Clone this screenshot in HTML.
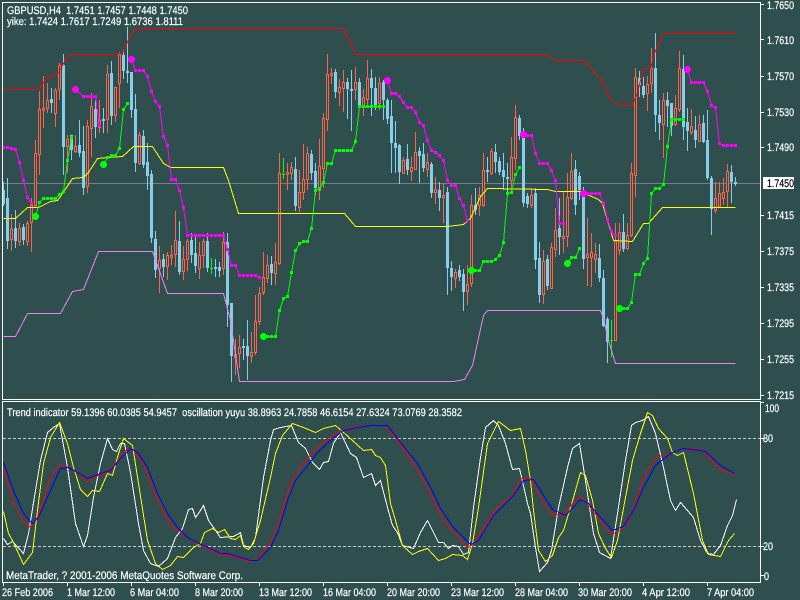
<!DOCTYPE html>
<html><head><meta charset="utf-8"><style>
html,body{margin:0;padding:0;background:#2F4F4F;width:800px;height:600px;overflow:hidden}
svg{display:block}
text{font-family:"Liberation Sans",sans-serif;font-size:11px;fill:#fff;stroke:#fff;stroke-width:.2px;text-rendering:geometricPrecision}
.c{shape-rendering:crispEdges}
.l{fill:none;stroke-width:1;shape-rendering:crispEdges;transform:translate(.5px,.5px)}
</style></head><body>
<svg width="800" height="600" viewBox="0 0 800 600" xmlns="http://www.w3.org/2000/svg">
<defs>
<marker id="mm" markerUnits="userSpaceOnUse" markerWidth="4" markerHeight="4" refX="1.5" refY="1.5" overflow="visible"><rect width="3" height="3" fill="#f0f" shape-rendering="crispEdges"/></marker>
<marker id="mg" markerUnits="userSpaceOnUse" markerWidth="4" markerHeight="4" refX="1.5" refY="1.5" overflow="visible"><rect width="3" height="3" fill="#0f0" shape-rendering="crispEdges"/></marker>
</defs>
<rect width="800" height="600" fill="#2F4F4F"/>
<g class="c">
<path d="M3 183.5H761" stroke="#708090" fill="none"/>
<path fill="none" stroke="#87CEEB" d="M3.5 182V206M7.5 178V249M15.5 210V248M23.5 224V245M51.5 88V113M63.5 54V175M71.5 135V160M79.5 120V157M83.5 126V195M95.5 100V138M103.5 108V133M111.5 61V125M123.5 50V79M127.5 27V83M131.5 72V118M135.5 94V172M143.5 130V168M147.5 143V190M151.5 170V243M155.5 231V278M163.5 254V277M179.5 221V275M191.5 233V263M195.5 235V273M207.5 233V272M215.5 259V277M219.5 262V277M227.5 233V327M231.5 303V382M243.5 339V360M247.5 320V380M271.5 256V285M295.5 157V211M311.5 150V180M315.5 163V195M335.5 69V98M347.5 78V119M351.5 70V131M359.5 78V107M371.5 69V116M375.5 77V110M383.5 80V120M387.5 98V124M391.5 100V173M395.5 121V173M399.5 144V184M407.5 144V175M419.5 147V183M423.5 143V172M431.5 162V198M439.5 182V211M447.5 187V295M451.5 261V291M459.5 265V281M463.5 269V311M475.5 188V215M487.5 157V182M495.5 144V173M499.5 157V175M503.5 153V190M507.5 163V193M519.5 115V140M523.5 128V207M527.5 193V208M535.5 188V269M539.5 242V303M547.5 255V290M559.5 198V255M575.5 160V215M579.5 172V200M583.5 187V269M599.5 244V282M603.5 270V327M607.5 317V363M623.5 214V252M639.5 71V97M643.5 77V98M655.5 33V132M659.5 100V140M667.5 92V127M671.5 103V136M683.5 55V140M687.5 108V151M695.5 116V148M703.5 115V143M707.5 110V180M711.5 176V235M731.5 165V203M735.5 177V186"/>
<path fill="#87CEEB" d="M2 190h3V204h-3zM6 198h3V241h-3zM14 228h3V241h-3zM22 227h3V240h-3zM50 99h3V103h-3zM62 65h3V147h-3zM70 135h3V150h-3zM78 145h3V153h-3zM82 151h3V188h-3zM94 109h3V127h-3zM102 119h3V121h-3zM110 73h3V116h-3zM122 55h3V71h-3zM126 71h3V73h-3zM130 72h3V110h-3zM134 109h3V163h-3zM142 136h3V165h-3zM146 162h3V176h-3zM150 174h3V238h-3zM154 239h3V270h-3zM162 259h3V267h-3zM178 241h3V272h-3zM190 240h3V255h-3zM194 253h3V266h-3zM206 241h3V268h-3zM214 267h3V269h-3zM218 267h3V271h-3zM226 242h3V305h-3zM230 303h3V356h-3zM242 346h3V348h-3zM246 346h3V356h-3zM270 264h3V273h-3zM294 169h3V206h-3zM310 154h3V173h-3zM314 171h3V188h-3zM334 72h3V92h-3zM346 82h3V89h-3zM350 89h3V91h-3zM358 82h3V105h-3zM370 78h3V88h-3zM374 88h3V105h-3zM382 82h3V100h-3zM386 100h3V119h-3zM390 116h3V143h-3zM394 143h3V148h-3zM398 145h3V172h-3zM406 159h3V170h-3zM418 151h3V156h-3zM422 154h3V168h-3zM430 164h3V193h-3zM438 190h3V198h-3zM446 192h3V268h-3zM450 268h3V277h-3zM458 270h3V277h-3zM462 274h3V292h-3zM474 205h3V210h-3zM486 170h3V172h-3zM494 152h3V162h-3zM498 161h3V172h-3zM502 170h3V177h-3zM506 177h3V179h-3zM518 118h3V136h-3zM522 135h3V203h-3zM526 196h3V204h-3zM534 193h3V260h-3zM538 258h3V295h-3zM546 259h3V286h-3zM558 228h3V237h-3zM574 169h3V205h-3zM578 176h3V190h-3zM582 192h3V259h-3zM598 258h3V278h-3zM602 278h3V326h-3zM606 319h3V342h-3zM622 232h3V249h-3zM638 78h3V85h-3zM642 86h3V95h-3zM654 68h3V115h-3zM658 115h3V123h-3zM666 100h3V106h-3zM670 103h3V126h-3zM682 69h3V127h-3zM686 122h3V131h-3zM694 130h3V140h-3zM702 123h3V142h-3zM706 140h3V178h-3zM710 178h3V209h-3zM730 172h3V182h-3zM734 182h3V184h-3z"/>
<path fill="none" stroke="#FF6347" d="M11.5 214V251M19.5 223V246M27.5 221V246M31.5 198V252M35.5 140V207M39.5 91V175M43.5 76V128M47.5 83V113M55.5 88V127M59.5 63V100M67.5 135V173M75.5 135V153M87.5 120V193M91.5 93V157M99.5 100V133M107.5 65V133M115.5 87V122M119.5 52V108M139.5 132V165M159.5 246V293M167.5 252V280M171.5 245V265M175.5 211V267M183.5 246V280M187.5 239V271M199.5 242V279M203.5 239V268M223.5 232V275M235.5 339V375M239.5 335V368M251.5 332V363M255.5 295V355M259.5 287V325M263.5 252V295M267.5 255V283M275.5 243V285M279.5 153V265M287.5 163V190M291.5 162V180M299.5 170V212M303.5 144V200M307.5 147V190M319.5 139V200M323.5 113V188M327.5 54V131M331.5 68V84M339.5 79V106M343.5 70V112M355.5 67V100M363.5 89V116M367.5 60V108M379.5 77V110M403.5 157V174M411.5 157V181M415.5 132V170M427.5 153V177M435.5 177V204M443.5 183V223M455.5 269V288M467.5 265V305M471.5 195V287M479.5 187V216M483.5 153V207M491.5 148V175M511.5 137V190M515.5 105V170M531.5 188V208M543.5 250V304M551.5 243V289M555.5 208V257M563.5 192V253M567.5 173V247M571.5 153V200M587.5 218V286M591.5 233V287M595.5 243V273M615.5 223V341M619.5 223V255M627.5 223V250M631.5 163V237M635.5 68V197M647.5 76V111M651.5 48V93M663.5 93V158M675.5 95V126M679.5 51V112M691.5 109V135M699.5 115V142M715.5 182V213M719.5 182V208M723.5 178V205M727.5 164V208"/>
<path fill="#2F4F4F" stroke="#FF6347" d="M10.5 229.5h2V239.5h-2zM18.5 228.5h2V241.5h-2zM26.5 223.5h2V241.5h-2zM30.5 205.5h2V222.5h-2zM34.5 153.5h2V205.5h-2zM38.5 109.5h2V154.5h-2zM42.5 108.5h2V110.5h-2zM46.5 100.5h2V108.5h-2zM54.5 90.5h2V113.5h-2zM58.5 65.5h2V89.5h-2zM66.5 139.5h2V146.5h-2zM74.5 146.5h2V151.5h-2zM86.5 126.5h2V186.5h-2zM90.5 106.5h2V128.5h-2zM98.5 120.5h2V127.5h-2zM106.5 74.5h2V119.5h-2zM114.5 87.5h2V115.5h-2zM118.5 54.5h2V83.5h-2zM138.5 135.5h2V163.5h-2zM158.5 260.5h2V268.5h-2zM166.5 255.5h2V266.5h-2zM170.5 255.5h2V257.5h-2zM174.5 240.5h2V254.5h-2zM182.5 259.5h2V271.5h-2zM186.5 241.5h2V259.5h-2zM198.5 255.5h2V268.5h-2zM202.5 241.5h2V255.5h-2zM222.5 242.5h2V268.5h-2zM234.5 354.5h2V357.5h-2zM238.5 347.5h2V353.5h-2zM250.5 352.5h2V356.5h-2zM254.5 321.5h2V352.5h-2zM258.5 293.5h2V321.5h-2zM262.5 277.5h2V292.5h-2zM266.5 265.5h2V278.5h-2zM274.5 262.5h2V273.5h-2zM278.5 173.5h2V263.5h-2zM286.5 172.5h2V174.5h-2zM290.5 167.5h2V173.5h-2zM298.5 192.5h2V207.5h-2zM302.5 179.5h2V192.5h-2zM306.5 153.5h2V179.5h-2zM318.5 166.5h2V190.5h-2zM322.5 118.5h2V168.5h-2zM326.5 74.5h2V119.5h-2zM330.5 73.5h2V75.5h-2zM338.5 87.5h2V92.5h-2zM342.5 82.5h2V88.5h-2zM354.5 82.5h2V89.5h-2zM362.5 97.5h2V105.5h-2zM366.5 78.5h2V99.5h-2zM378.5 83.5h2V103.5h-2zM402.5 160.5h2V173.5h-2zM410.5 167.5h2V171.5h-2zM414.5 152.5h2V169.5h-2zM426.5 162.5h2V169.5h-2zM434.5 189.5h2V192.5h-2zM442.5 195.5h2V197.5h-2zM454.5 272.5h2V278.5h-2zM466.5 284.5h2V291.5h-2zM470.5 205.5h2V283.5h-2zM478.5 195.5h2V205.5h-2zM482.5 170.5h2V205.5h-2zM490.5 151.5h2V173.5h-2zM510.5 157.5h2V180.5h-2zM514.5 117.5h2V158.5h-2zM530.5 195.5h2V205.5h-2zM542.5 261.5h2V294.5h-2zM550.5 247.5h2V288.5h-2zM554.5 230.5h2V249.5h-2zM562.5 236.5h2V238.5h-2zM566.5 197.5h2V236.5h-2zM570.5 171.5h2V198.5h-2zM586.5 254.5h2V257.5h-2zM590.5 252.5h2V257.5h-2zM594.5 254.5h2V259.5h-2zM614.5 241.5h2V340.5h-2zM618.5 232.5h2V250.5h-2zM626.5 235.5h2V248.5h-2zM630.5 173.5h2V235.5h-2zM634.5 77.5h2V175.5h-2zM646.5 84.5h2V93.5h-2zM650.5 68.5h2V83.5h-2zM662.5 100.5h2V124.5h-2zM674.5 108.5h2V124.5h-2zM678.5 68.5h2V109.5h-2zM690.5 126.5h2V132.5h-2zM698.5 124.5h2V141.5h-2zM714.5 198.5h2V210.5h-2zM718.5 193.5h2V206.5h-2zM722.5 192.5h2V198.5h-2zM726.5 171.5h2V191.5h-2z"/>
<path fill="none" stroke="#0f0" d="M211.5 258V274M210 268.5h3M283.5 158V179M282 174.5h3M611.5 320V357M610 340.5h3"/>

<polyline class="l" stroke="#f00" points="3,89 38,89 47,77 52,76 58,72 63,63 68,55 72,54 117,54 123,51 128,39 135,28 343,28 355,54 545,54 555,60 583,60 600,78 610,100 620,105 632,105 637,92 643,68 650,68 655,50 663,33 735,33"/>
<polyline class="l" stroke="#ff0" points="3,218 15,218 27,207 38,207 50,201 57,200 62,193 72,178 83,177 88,172 97,158 107,157 122,156 133,146 152,146 163,163 170,167 223,167 228,180 238,213 344,213 355,226 447,226 463,224 470,218 480,196 487,188 547,189 555,191 580,191 598,199 602,203 613,240 632,241 643,223 648,223 662,207 735,207"/>
<polyline class="l" stroke="#EE82EE" points="3,336 15,336 27,313 60,313 72,291 83,289 98,251 152,251 167,293 223,293 230,320 239,381 453,381 464,379 472,365 483,315 487,310 600,310 603,318 608,340 615,363 735,363"/>

<polyline class="l" stroke="#f0f" marker-start="url(#mm)" marker-mid="url(#mm)" marker-end="url(#mm)" points="3,147 7,147 11,148 15,149 19,162 23,180 27,197 31,203"/>
<polyline class="l" stroke="#f0f" marker-mid="url(#mm)" marker-end="url(#mm)" points="75,89 83,96 87,96 91,96 95,96 99,125"/>
<polyline class="l" stroke="#f0f" marker-mid="url(#mm)" marker-end="url(#mm)" points="131,59 135,70 139,70 143,70 147,76 151,91 155,101 159,106 163,136 167,145 171,179 175,179 179,190 183,207 187,235 191,235 195,235 199,235 203,235 207,235 211,235 215,235 219,235 223,235 227,249 231,265 235,265 239,275 243,275 247,275 251,275 255,275 259,277"/>
<polyline class="l" stroke="#f0f" marker-mid="url(#mm)" marker-end="url(#mm)" points="387,80 391,93 395,93 399,96 403,102 407,107 411,107 415,112 419,122 423,125 427,140 431,150 435,152 439,155 443,160 447,180 451,185 455,185 459,198 463,205 467,220"/>
<polyline class="l" stroke="#f0f" marker-mid="url(#mm)" marker-end="url(#mm)" points="523,134 527,135 531,135 535,153 539,163 543,163 547,163 551,170 555,180 559,223 563,223"/>
<polyline class="l" stroke="#f0f" marker-mid="url(#mm)" marker-end="url(#mm)" points="583,193 587,193 591,193 595,193 599,193 603,203 607,219 611,231 615,235"/>
<polyline class="l" stroke="#f0f" marker-mid="url(#mm)" marker-end="url(#mm)" points="687,69 691,82 695,82 699,82 703,82 707,91 711,105 715,107 719,143 723,145 727,145 731,145 735,145"/>

<polyline class="l" stroke="#0f0" marker-mid="url(#mg)" marker-end="url(#mg)" points="35,216 39,202 43,198 47,198 51,198 55,198 59,194 63,191 67,160 71,137"/>
<polyline class="l" stroke="#0f0" marker-mid="url(#mg)" marker-end="url(#mg)" points="103,164 107,157 111,155 115,155 119,148 123,109 127,103"/>
<polyline class="l" stroke="#0f0" marker-mid="url(#mg)" marker-end="url(#mg)" points="263,336 267,336 271,336 275,336 279,310 283,298 287,296 291,272 295,250 299,243 303,241 307,241 311,228 315,190 319,188 323,182 327,163 331,163 335,150 339,150 343,150 347,150 351,150 355,141 359,106 363,106 367,106 371,106 375,106 379,106 383,106"/>
<polyline class="l" stroke="#0f0" marker-mid="url(#mg)" marker-end="url(#mg)" points="471,270 475,270 479,270 483,261 487,261 491,261 495,259 499,255 503,242 507,193 511,192 515,174 519,167"/>
<polyline class="l" stroke="#0f0" marker-mid="url(#mg)" marker-end="url(#mg)" points="567,263 571,257 575,257 579,248"/>
<polyline class="l" stroke="#0f0" marker-mid="url(#mg)" marker-end="url(#mg)" points="619,308 623,308 627,308 631,302 635,274 639,274 643,263 647,258 651,193 655,188 659,188 663,184 667,146 671,119 675,119 679,119 683,119"/>
<g fill="#0f0"><circle cx="35.5" cy="216.5" r="3.5"/><circle cx="103.5" cy="164.5" r="3.5"/><circle cx="263.5" cy="336.5" r="3.5"/><circle cx="471.5" cy="270.5" r="3.5"/><circle cx="567.5" cy="263.5" r="3.5"/><circle cx="619.5" cy="308.5" r="3.5"/></g>
<g fill="#f0f"><circle cx="75.5" cy="89.5" r="3.5"/><circle cx="131.5" cy="59.5" r="3.5"/><circle cx="387.5" cy="80.5" r="3.5"/><circle cx="523.5" cy="134.5" r="3.5"/><circle cx="583.5" cy="193.5" r="3.5"/><circle cx="687.5" cy="69.5" r="3.5"/></g>

<path fill="none" stroke="#C8C8C8" stroke-dasharray="3 2" d="M3 438.5H760M3 546.5H760"/>

<polyline class="l" stroke="#fff" points="3,538 7,544 12,541 23,553 28,533 35,490 40,460 47,432 53,427 59,423 67,467 75,523 83,546 87,535 93,497 100,463 107,438 112,449 116,451 120,443 124,443 130,472 138,523 143,550 150,563 158,566 167,558 175,537 182,528 188,509 192,508 195,517 198,513 203,505 208,520 213,527 220,537 233,536 240,532 243,545 250,547 255,537 263,477 270,440 273,429 280,427 291,425 298,442 305,448 312,462 319,469 323,462 328,461 333,443 340,432 350,453 356,457 363,477 371,473 375,485 380,480 387,507 392,525 397,532 402,545 413,548 420,532 427,520 438,542 443,542 448,548 452,545 458,546 463,554 468,552 473,507 480,457 485,427 493,420 498,425 505,443 512,469 519,468 527,503 530,513 535,547 539,571 547,562 551,550 558,507 567,467 572,448 579,443 585,480 593,533 599,552 610,558 617,513 625,460 631,425 635,422 642,420 648,416 655,433 663,467 670,500 675,510 680,502 687,510 693,517 700,540 707,553 713,554 720,545 727,525 732,515 736,499"/>
<polyline class="l" stroke="#ff0" points="3,511 8,533 13,542 23,564 32,552 37,510 43,463 50,437 59,422 67,443 73,467 80,489 87,496 92,490 99,491 107,473 112,475 118,453 123,438 132,445 138,483 147,540 155,563 162,569 170,565 177,556 183,557 193,547 200,543 204,532 212,528 218,532 224,529 230,538 235,539 240,535 243,546 248,549 253,543 260,520 270,477 275,453 282,435 292,423 303,427 315,432 323,428 335,425 342,431 352,440 363,450 371,449 375,455 380,457 385,465 390,503 395,520 402,545 412,554 418,551 427,548 438,560 445,558 452,554 462,555 467,559 472,543 478,507 487,443 498,421 510,430 520,428 525,450 530,480 533,510 538,550 545,561 552,555 558,537 563,530 573,497 580,472 585,475 592,500 598,533 605,548 611,557 617,540 625,497 632,460 640,433 647,412 652,415 658,428 667,438 672,452 677,455 683,452 693,493 702,540 708,554 720,556 728,540 734,533"/>
<polyline class="l" stroke="#f00" points="3,467 13,503 22,520 30,527 38,515 50,477 60,463 68,467 77,471 87,481 97,475 107,472 115,463 127,448 133,449 143,463 153,490 163,513 173,527 187,537 203,546 220,554 227,554 250,561 257,559 270,542 278,523 287,493 293,477 303,463 312,452 323,442 337,432 352,427 370,425 385,425 397,440 413,463 427,487 443,520 453,532 467,547 473,543 487,522 497,507 512,495 520,478 530,478 540,497 550,513 563,515 572,503 580,496 590,507 602,523 612,534 622,528 630,517 643,477 655,457 670,453 682,448 693,448 705,452 718,468 734,475"/>
<polyline class="l" stroke="#00f" points="3,462 13,490 23,513 32,523 38,517 50,490 60,468 68,467 77,472 87,478 100,473 110,470 120,458 130,448 137,452 147,467 157,493 167,513 177,527 187,537 203,545 220,553 227,553 250,560 257,560 270,547 278,530 287,500 295,480 307,465 317,452 330,440 343,430 357,427 370,425 387,425 400,442 417,463 430,487 440,508 453,527 470,544 478,540 493,515 513,495 523,480 533,479 540,490 552,509 565,515 580,499 588,503 600,517 612,530 623,526 633,510 643,487 655,465 670,453 682,448 693,449 705,451 720,465 734,473"/>

<path fill="none" stroke="#fff" d="M2.5 2.5H760.5V399.5H2.5ZM2.5 401.5H760.5V582.5H2.5Z"/>
<path fill="none" stroke="#fff" d="M761 4.5h3M761 39.5h3M761 76.5h3M761 112.5h3M761 147.5h3M761 215.5h3M761 251.5h3M761 287.5h3M761 323.5h3M761 359.5h3M761 395.5h3M761 402.5h3M761 438.5h3M761 546.5h3M761 575.5h3M3.5 583V586M67.5 583V586M131.5 583V586M195.5 583V586M259.5 583V586M323.5 583V586M387.5 583V586M451.5 583V586M515.5 583V586M579.5 583V586M643.5 583V586M707.5 583V586"/>
<rect x="763" y="177" width="31" height="12" fill="#fff"/>
</g>

<text x="7" y="14" textLength="181" lengthAdjust="spacingAndGlyphs" xml:space="preserve">GBPUSD,H4  1.7451 1.7457 1.7448 1.7450</text>
<text x="7" y="25" textLength="176" lengthAdjust="spacingAndGlyphs">yike: 1.7424 1.7617 1.7249 1.6736 1.8111</text>
<text x="7" y="416" textLength="455" lengthAdjust="spacingAndGlyphs" xml:space="preserve">Trend indicator 59.1396 60.0385 54.9457  oscillation yuyu 38.8963 24.7858 46.6154 27.6324 73.0769 28.3582</text>
<text x="6" y="579" textLength="237" lengthAdjust="spacingAndGlyphs">MetaTrader, ? 2001-2006 MetaQuotes Software Corp.</text>

<text x="767" y="9" textLength="27" lengthAdjust="spacingAndGlyphs">1.7650</text>
<text x="767" y="44" textLength="27" lengthAdjust="spacingAndGlyphs">1.7610</text>
<text x="767" y="80" textLength="27" lengthAdjust="spacingAndGlyphs">1.7570</text>
<text x="767" y="116" textLength="27" lengthAdjust="spacingAndGlyphs">1.7530</text>
<text x="767" y="151" textLength="27" lengthAdjust="spacingAndGlyphs">1.7490</text>
<text x="767" y="187" textLength="27" lengthAdjust="spacingAndGlyphs" style="fill:#000;stroke:#000">1.7450</text>
<text x="767" y="219" textLength="27" lengthAdjust="spacingAndGlyphs">1.7415</text>
<text x="767" y="255" textLength="27" lengthAdjust="spacingAndGlyphs">1.7375</text>
<text x="767" y="291" textLength="27" lengthAdjust="spacingAndGlyphs">1.7335</text>
<text x="767" y="327" textLength="27" lengthAdjust="spacingAndGlyphs">1.7295</text>
<text x="767" y="363" textLength="27" lengthAdjust="spacingAndGlyphs">1.7255</text>
<text x="767" y="399" textLength="27" lengthAdjust="spacingAndGlyphs">1.7215</text>

<text x="765" y="412" textLength="14" lengthAdjust="spacingAndGlyphs">100</text>
<text x="763" y="442" textLength="10" lengthAdjust="spacingAndGlyphs">80</text>
<text x="763" y="550" textLength="10" lengthAdjust="spacingAndGlyphs">20</text>
<text x="764" y="580" textLength="5" lengthAdjust="spacingAndGlyphs">0</text>

<text x="2" y="596" textLength="51" lengthAdjust="spacingAndGlyphs">26 Feb 2006</text>
<text x="67" y="596" textLength="48" lengthAdjust="spacingAndGlyphs">1 Mar 12:00</text>
<text x="130" y="596" textLength="49" lengthAdjust="spacingAndGlyphs">6 Mar 04:00</text>
<text x="195" y="596" textLength="48" lengthAdjust="spacingAndGlyphs">8 Mar 20:00</text>
<text x="259" y="596" textLength="53" lengthAdjust="spacingAndGlyphs">13 Mar 12:00</text>
<text x="323" y="596" textLength="53" lengthAdjust="spacingAndGlyphs">16 Mar 04:00</text>
<text x="387" y="596" textLength="53" lengthAdjust="spacingAndGlyphs">20 Mar 20:00</text>
<text x="451" y="596" textLength="53" lengthAdjust="spacingAndGlyphs">23 Mar 12:00</text>
<text x="515" y="596" textLength="53" lengthAdjust="spacingAndGlyphs">28 Mar 04:00</text>
<text x="578" y="596" textLength="54" lengthAdjust="spacingAndGlyphs">30 Mar 20:00</text>
<text x="642" y="596" textLength="48" lengthAdjust="spacingAndGlyphs">4 Apr 12:00</text>
<text x="707" y="596" textLength="47" lengthAdjust="spacingAndGlyphs">7 Apr 04:00</text>
</svg>
</body></html>
